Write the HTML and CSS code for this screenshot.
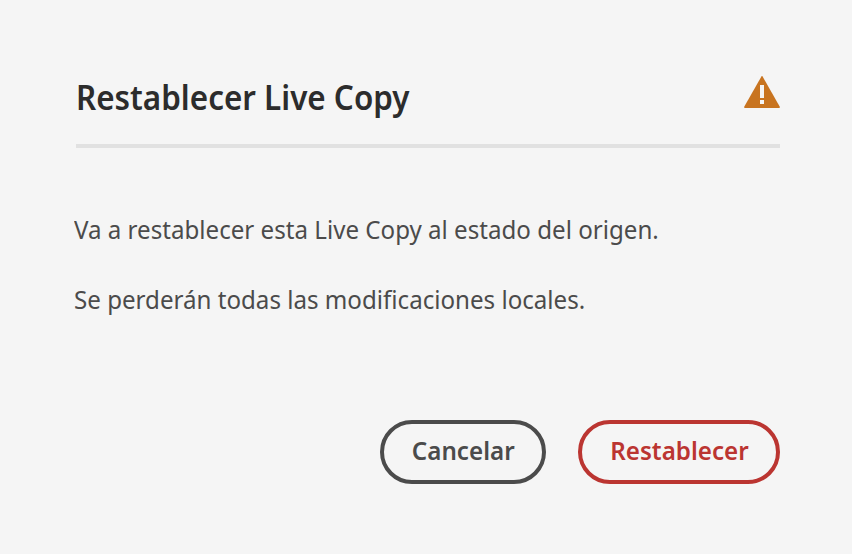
FILE: index.html
```html
<!DOCTYPE html>
<html lang="es">
<head>
<meta charset="utf-8">
<title>Restablecer Live Copy</title>
<link rel="stylesheet" href="styles.css">
</head>
<body>
<main class="dialog">
  <header class="header">
    <h1><span class="title">Restablecer Live Copy</span></h1>
    <svg class="alert" viewBox="0 0 36 34" aria-hidden="true">
      <path fill="#c87420" d="M17.4.4Q18-.4 18.6.4L35.8 30.8Q36.2 32 35 32H1Q-.2 32 .2 30.8Z"/>
      <path fill="#f5f5f5" d="M16 9h4v13h-4zM16 24h4v4h-4z"/>
    </svg>
  </header>
  <section class="content">
    <p><span class="line-one">Va a restablecer esta Live Copy al estado del origen.</span></p>
    <p><span class="line-two">Se perderán todas las modificaciones locales.</span></p>
  </section>
  <footer class="footer">
    <button class="button cancel"><span>Cancelar</span></button>
    <button class="button reset"><span>Restablecer</span></button>
  </footer>
</main>
</body>
</html>
```
FILE: styles.css
```css
* { box-sizing: border-box; }
body { margin: 0; background: #f5f5f5; font-family: "Noto Sans", "Open Sans", sans-serif; color: #4b4b4b; }
.dialog { height: 554px; padding: 74px 72px 70px 76px; display: flex; flex-direction: column; }
.header { height: 74px; display: flex; justify-content: space-between; border-bottom: 4px solid #e1e1e1; }
h1 { margin: 0; font-size: 34px; line-height: 46px; font-weight: 600; color: #2c2c2c; white-space: nowrap; }
h1 span, p span, .button span { display: inline-block; }
.title { transform-origin: left; transform: scaleX(.924); }
.alert { width: 36px; height: 34px; margin-top: 2px; flex: none; }
.content { margin-top: 63px; margin-left: -2px; }
p { margin: 0; height: 70px; font-size: 26px; line-height: 36px; white-space: nowrap; }
.line-one, .line-two { transform-origin: left; transform: scaleX(.928); }
.footer { margin-top: auto; display: flex; justify-content: flex-end; gap: 32px; }
.button { height: 64px; padding: 0; border: 4px solid #4b4b4b; border-radius: 32px; background: transparent; color: #4b4b4b; font: 600 26px/52px "Noto Sans", sans-serif; display: flex; justify-content: center; }
.button span { transform: scaleX(.93); }
.cancel { width: 166px; }
.reset { width: 202px; border-color: #bb3531; color: #bb3531; }
```
